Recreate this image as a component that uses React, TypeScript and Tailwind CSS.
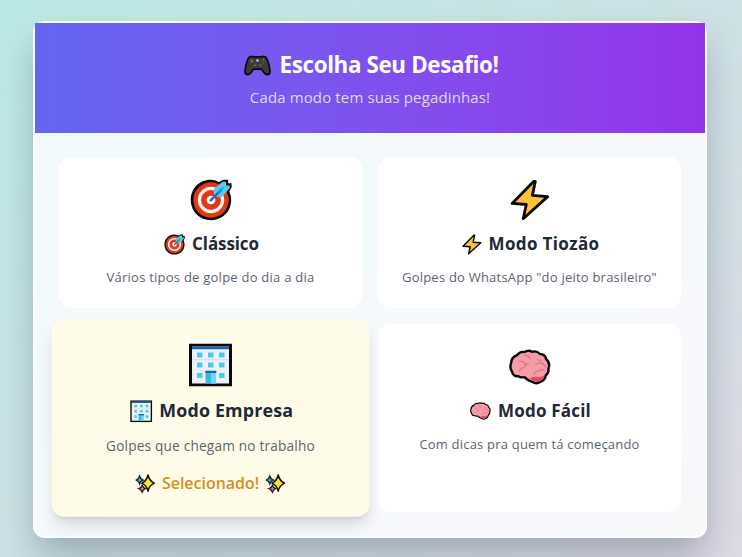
import type { ReactNode } from 'react';

type IconProps = { className?: string };

function Gamepad({ className }: IconProps) {
  return (
    <svg viewBox="0 0 28 22" className={className}>
      <path d="M7 1.8Q5 2 4 4.2Q1 11 .9 17.4Q1 20.4 3.6 20.6Q5.8 20.5 7.6 18Q9.2 15 10.5 14.8H17.5Q18.8 15 20.4 18Q22.2 20.5 24.4 20.6Q27 20.4 27.1 17.4Q27 11 24 4.2Q23 2 21 1.8Q19 1.2 17.5 2H10.5Q9 1.2 7 1.8Z" fill="#3b3b39" stroke="#0b0a12" strokeWidth="1.8" strokeLinejoin="round" />
      <circle cx="8" cy="6.4" r="2" fill="#52534f" />
      <circle cx="8" cy="6.4" r=".8" fill="#8d8d88" />
      <path d="M11.3 9v3.2M9.7 10.6h3.2" stroke="#66675f" strokeWidth="1" />
      <circle cx="17" cy="10.5" r="1.7" fill="#55564f" />
      <circle cx="14" cy="5.8" r="1.3" fill="#c7d6e2" />
      <circle cx="20.2" cy="4.5" r=".7" fill="#b9983f" />
      <circle cx="18.4" cy="6.4" r=".6" fill="#4b83a8" />
      <circle cx="22" cy="6.4" r=".6" fill="#a85550" />
      <circle cx="20.2" cy="8.2" r=".6" fill="#5b9060" />
    </svg>
  );
}

function Target({ className }: IconProps) {
  return (
    <svg viewBox="0 0 42 42" className={className}>
      <path d="M20.5.8C9.2.8.8 9.6.8 21S9.6 41.2 21 41.2 41.2 32.4 41.2 21Q41.2 16.5 39.3 12.5L41.6 8.6V4.2H38.2V.8H33L29 3Q25 .8 20.5.8Z" fill="#0b0b0b" />
      <circle cx="21" cy="21" r="17.7" fill="#e23819" />
      <circle cx="21" cy="21" r="11.6" fill="none" stroke="#fff5f1" strokeWidth="3.2" />
      <circle cx="21" cy="21" r="4.3" fill="#fff" />
      <path d="M24.3 17.5L23.3 10.5 32.5 2.8H36V6.4H39.7V9.2L31.2 18.4Z" fill="#53cdf0" />
      <path d="M20.7 21.3L31 11" stroke="#176fba" strokeWidth="2.6" strokeLinecap="round" />
      <path d="M28.5 13.5L34 8" stroke="#2aa3e0" strokeWidth="1.5" />
    </svg>
  );
}

function Bolt({ className }: IconProps) {
  return (
    <svg viewBox="0 0 40 42" className={className}>
      <path d="M23.6 2.4L2.1 24.4 16.3 25.5 13.2 39.7 37.7 17.6 22.4 16.4 25.3 2.4Z" fill="#ffc334" stroke="#090909" strokeWidth="2.8" strokeLinejoin="round" />
    </svg>
  );
}

function Office({ className }: IconProps) {
  return (
    <svg viewBox="0 0 43 43" className={className}>
      <path d="M1.5 1.5H41.5V41.5H1.5Z" fill="#edf0f4" stroke="#090b0d" strokeWidth="3" />
      <path d="M3 3H40V5.8H3Z" fill="#1764ad" />
      <path d="M3 16.2H40" stroke="#dad8df" strokeWidth="1" />
      <path d="M8 9h5.5v5H8zM19 9h5.5v5H19zM30 9h5.5v5H30zM8 19h5.5v5H8zM19 19h5.5v5H19zM30 19h5.5v5H30zM8 29.5h5.5v5H8zM30 29.5h5.5v5H30z" fill="#49cbed" />
      <path d="M16.6 28H27V40H16.6Z" fill="#39b9e8" />
      <path d="M22 29.5H27V40H22Z" fill="#70d8f6" />
      <path d="M16.3 28.4H27.3" stroke="#1769a9" strokeWidth="2.4" />
    </svg>
  );
}

function Brain({ className }: IconProps) {
  return (
    <svg viewBox="0 0 42 36" className={className}>
      <path d="M8 6.2Q11 2.1 15.4 3.1Q19.3.6 23.2 2.8Q27.5 1.4 31 5Q36.3 5.2 37.2 10.2Q41.6 14.1 39.5 19.5Q40 24.1 36.8 26.2Q36.2 31.4 31.5 32.8Q27.5 35.6 23.1 32.8Q18.5 31.6 15.5 28.1Q11.5 29 9.3 27.2Q4 27.6 3 22.4Q.4 18.8 2 14.6Q2.2 8.4 8 6.2Z" fill="#f69ca9" stroke="#090909" strokeWidth="2.4" strokeLinejoin="round" />
      <path d="M21 29.2Q24 27.2 28.3 28.3Q32 28 35.5 26.5Q35 30.3 31 31.4Q26.3 34.3 22.8 31Z" fill="#e64c60" />
      <path d="M10.3 12.3Q15.5 11.8 16.3 15.6M19 14.7Q15.4 15.4 15.7 18.6Q11.4 18.3 10.4 22M15.7 6.2Q20.1 6.2 20.8 9.8M28.7 10.8Q32.4 11.2 32.2 14.3Q35.6 15.1 36.4 18M31.7 14.4Q28.4 13.5 26.6 15.7M34.9 21.1Q32 19.7 28.5 22.4Q25.2 22.8 25.2 26" fill="none" stroke="#dd7a89" strokeWidth="1.4" strokeLinecap="round" />
    </svg>
  );
}

function Sparkles({ className }: IconProps) {
  return (
    <svg viewBox="0 0 20 20" className={className}>
      <path d="M4.2 2.6Q5 5.4 7.8 6.4Q5 7.4 4.2 10.2Q3.4 7.4.8 6.4Q3.4 5.4 4.2 2.6Z" fill="#4ca6bb" stroke="#17242a" strokeWidth="1.4" />
      <path d="M6.8 11.7Q7.6 14.3 10 15.1Q7.6 16 6.8 18.7Q6 16 3.4 15.1Q6 14.3 6.8 11.7Z" fill="#cf879a" stroke="#30242a" strokeWidth="1.4" />
      <path d="M12.6 1.3Q14 7.4 19 9.5Q14 11.6 12.6 17.5Q11.2 11.6 6.4 9.5Q11.2 7.4 12.6 1.3Z" fill="#ffea1f" stroke="#17150c" strokeWidth="1.6" strokeLinejoin="round" />
    </svg>
  );
}

type ModeProps = {
  large: ReactNode;
  small: ReactNode;
  title: string;
  titleClass: string;
  text: string;
  textClass: string;
  selected?: boolean;
};

function Mode({ large, small, title, titleClass, text, textClass, selected }: ModeProps) {
  return (
    <button
      className={`flex flex-col items-center rounded-xl pt-5 ${
        selected ? 'scale-105 bg-[#fefbe8] shadow-[0_10px_15px_-3px_rgba(0,0,0,0.12),0_4px_6px_-4px_rgba(0,0,0,0.12)]' : 'bg-white'
      }`}
    >
      <span className="flex h-[46px] items-center">{large}</span>
      <span className="mt-[7px] flex h-7 items-center gap-[7px] pl-[2px]">
        {small}
        <span className={`whitespace-nowrap text-[17px] font-bold text-[#1f2937] ${titleClass}`}>{title}</span>
      </span>
      <span className={`mt-[9px] h-5 whitespace-nowrap text-[13px] leading-5 text-[#5b6472] ${textClass}`}>{text}</span>
      {selected && (
        <span className="mt-[14px] flex h-6 items-center gap-[6px] text-[15.2px] font-semibold text-[#ce931c]">
          <Sparkles className="size-[19px]" />
          <span>Selecionado!</span>
          <Sparkles className="size-[19px]" />
        </span>
      )}
    </button>
  );
}

export default function App() {
  return (
    <main className="h-[557px] w-[742px] overflow-hidden bg-linear-to-br from-[#bae9e5] to-[#ddd9e5] pl-[33px] pt-[21px] font-['Open_Sans','Noto_Sans',sans-serif]">
      <section className="h-[517px] w-[674px] rounded-xl border-2 border-white/50 bg-linear-to-br from-[#f1fafb] to-[#f8f8fb] shadow-[0_20px_35px_-3px_rgba(15,35,50,0.28)]">
        <header className="flex h-[110px] flex-col items-center bg-linear-to-r from-[#6366f1] to-[#9333ea] pt-[26px]">
          <h1 className="flex h-8 items-center gap-[9px] pl-[2px] text-[22.4px] font-bold tracking-[-0.37px] text-white">
            <Gamepad className="h-[21px] w-[27px]" />
            <span className="whitespace-nowrap">Escolha Seu Desafio!</span>
          </h1>
          <p className="mt-1 h-6 text-[15px] leading-6 tracking-[0.13px] text-[#ddd8ff]">Cada modo tem suas pegadinhas!</p>
        </header>
        <div className="grid grid-cols-[303px_303px] grid-rows-[151px_188px] gap-4 px-6 pt-6">
          <Mode large={<Target className="size-[42px]" />} small={<Target className="size-[21px]" />} title="Clássico" titleClass="tracking-[-0.1px]" text="Vários tipos de golpe do dia a dia" textClass="tracking-[0.24px]" />
          <Mode large={<Bolt className="h-[42px] w-10" />} small={<Bolt className="h-[21px] w-5" />} title="Modo Tiozão" titleClass="tracking-[0.36px]" text={'Golpes do WhatsApp "do jeito brasileiro"'} textClass="tracking-[0.22px]" />
          <Mode selected large={<Office className="size-[41px]" />} small={<Office className="size-[21px]" />} title="Modo Empresa" titleClass="tracking-[0.15px]" text="Golpes que chegam no trabalho" textClass="tracking-[0.18px]" />
          <Mode large={<Brain className="h-[36px] w-[42px]" />} small={<Brain className="h-[18px] w-[21px]" />} title="Modo Fácil" titleClass="tracking-[0.2px]" text="Com dicas pra quem tá começando" textClass="tracking-[0.2px]" />
        </div>
      </section>
    </main>
  );
}
